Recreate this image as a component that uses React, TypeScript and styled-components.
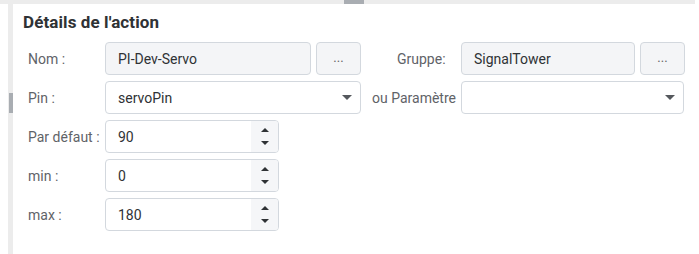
import React from "react";
import styled, { createGlobalStyle } from "styled-components";

const Global = createGlobalStyle`
  html, body { margin: 0; padding: 0; background: #fff; }
  body { font-family: Roboto, "Noto Sans", "Liberation Sans", sans-serif; }
  * { box-sizing: border-box; }
`;

const Page = styled.div`
  width: 699px;
  height: 254px;
  display: flex;
  flex-direction: column;
  overflow: hidden;
`;

const HTrack = styled.div`
  height: 4px;
  width: 695px;
  background: #ececec;
  flex: none;
  display: flex;
`;

const HThumb = styled.div`
  margin-left: 344px;
  width: 20px;
  height: 4px;
  background: #a9adb2;
`;

const Body = styled.div`
  flex: 1;
  display: flex;
`;

const Gutter = styled.div`
  width: 8px;
  flex: none;
`;

const VTrack = styled.div`
  width: 5px;
  flex: none;
  background: #ececec;
  display: flex;
  flex-direction: column;
`;

const VThumb = styled.div`
  margin-top: 89px;
  margin-left: 1px;
  width: 4px;
  height: 20px;
  background: #a9adb2;
`;

const Panel = styled.div`
  flex: 1;
  background: #fff;
  padding: 8px 0 0 10px;
`;

const Title = styled.h2`
  margin: 0;
  font-size: 17px;
  font-weight: 700;
  line-height: 20px;
  color: #2f3235;
  letter-spacing: 0.1px;
`;

const Form = styled.div`
  margin-top: 10px;
  padding-left: 5px;
  display: flex;
  flex-direction: column;
  gap: 6px;
`;

const Row = styled.div`
  display: flex;
  align-items: center;
  height: 33px;
`;

const Label = styled.div<{ $w: number; $pl?: number }>`
  width: ${(p) => p.$w}px;
  padding-left: ${(p) => p.$pl ?? 0}px;
  flex: none;
  font-size: 14px;
  color: #5f6368;
  white-space: nowrap;
`;

const Field = styled.div<{ $w: number; $ro?: boolean }>`
  width: ${(p) => p.$w}px;
  height: 33px;
  flex: none;
  border: 1px solid #d3d8de;
  border-radius: 4px;
  background: ${(p) => (p.$ro ? "#f4f5f7" : "#fff")};
  display: flex;
  align-items: center;
  padding-left: 12px;
  font-size: 14px;
  color: #2f3235;
  overflow: hidden;
`;

const Value = styled.span`
  flex: 1;
`;

const DotsButton = styled.div`
  width: 45px;
  height: 33px;
  flex: none;
  margin-left: 5px;
  border: 1px solid #d3d8de;
  border-radius: 4px;
  background: #f4f5f7;
  display: flex;
  align-items: center;
  justify-content: center;
  font-size: 13px;
  color: #666;
  padding-bottom: 2px;
`;

const Arrow = styled.div`
  width: 0;
  height: 0;
  border-left: 5px solid transparent;
  border-right: 5px solid transparent;
  border-top: 5px solid #55585d;
  margin-right: 8px;
`;

const Spinner = styled.div`
  width: 27px;
  align-self: stretch;
  background: #f5f6f8;
  display: flex;
  flex-direction: column;
  align-items: center;
  justify-content: center;
  gap: 9px;
`;

const Tri = styled.div<{ $up?: boolean }>`
  width: 0;
  height: 0;
  border-left: 4.5px solid transparent;
  border-right: 4.5px solid transparent;
  ${(p) =>
    p.$up ? "border-bottom: 4px solid #2f3235;" : "border-top: 4px solid #2f3235;"}
`;

const NumberField = ({ value }: { value: string }) => (
  <Field $w={174}>
    <Value>{value}</Value>
    <Spinner>
      <Tri $up />
      <Tri />
    </Spinner>
  </Field>
);

export default function App() {
  return (
    <Page>
      <Global />
      <HTrack>
        <HThumb />
      </HTrack>
      <Body>
        <Gutter />
        <VTrack>
          <VThumb />
        </VTrack>
        <Panel>
          <Title>Détails de l'action</Title>
          <Form>
            <Row>
              <Label $w={77}>Nom :</Label>
              <Field $w={206} $ro>
                <Value>PI-Dev-Servo</Value>
              </Field>
              <DotsButton>...</DotsButton>
              <Label $w={100} $pl={36}>Gruppe:</Label>
              <Field $w={174} $ro>
                <Value>SignalTower</Value>
              </Field>
              <DotsButton>...</DotsButton>
            </Row>
            <Row>
              <Label $w={77}>Pin :</Label>
              <Field $w={256}>
                <Value>servoPin</Value>
                <Arrow />
              </Field>
              <Label $w={100} $pl={11}>ou Paramètre</Label>
              <Field $w={223}>
                <Value />
                <Arrow />
              </Field>
            </Row>
            <Row>
              <Label $w={77}>Par défaut :</Label>
              <NumberField value="90" />
            </Row>
            <Row>
              <Label $w={77}>min :</Label>
              <NumberField value="0" />
            </Row>
            <Row>
              <Label $w={77}>max :</Label>
              <NumberField value="180" />
            </Row>
          </Form>
        </Panel>
      </Body>
    </Page>
  );
}
